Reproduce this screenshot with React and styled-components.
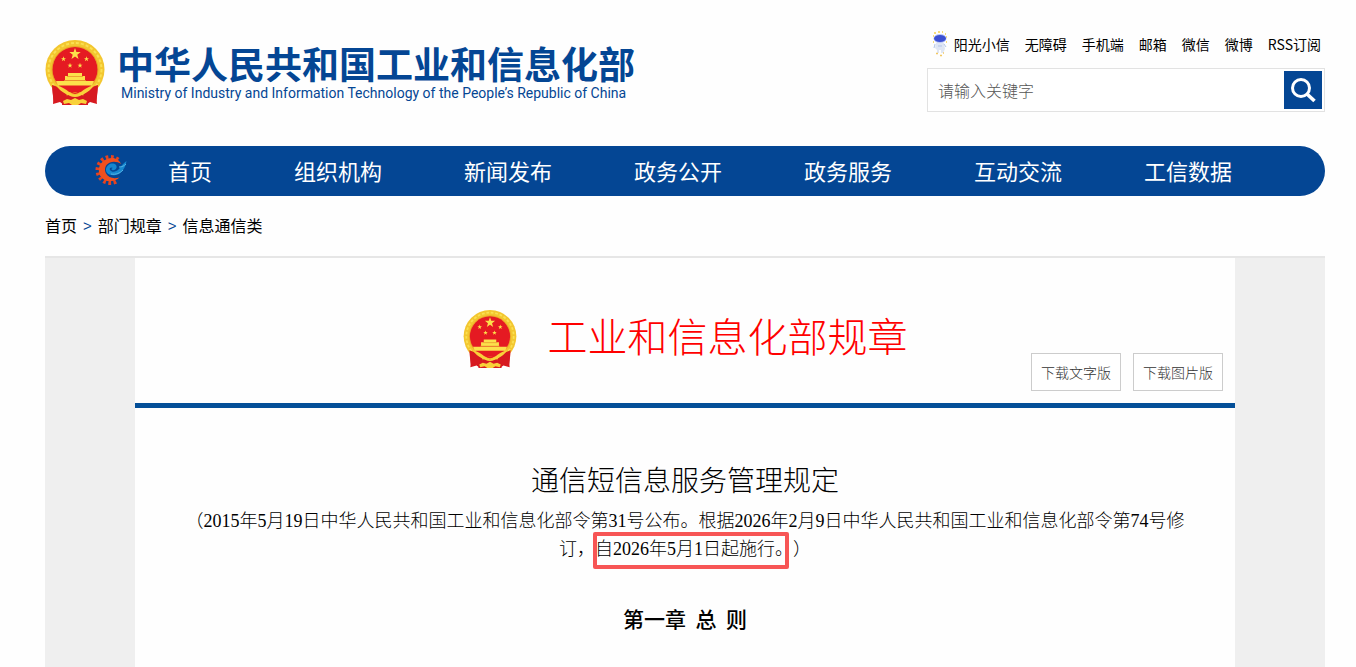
import React from "react";
import styled, { createGlobalStyle } from "styled-components";

const GlobalStyle = createGlobalStyle`
  * {
    box-sizing: border-box;
  }

  body {
    margin: 0;
    background-color: #fefefe;
    color: #000;
    font-family: "Noto Sans CJK SC", sans-serif;
    font-size: 16px;
  }

  a {
    color: inherit;
    text-decoration: none;
  }
`;

const Page = styled.div`
  display: flex;
  flex-direction: column;
  min-height: 100vh;
  padding: 0 31px 0 45px;
`;

const Header = styled.header`
  display: flex;
  justify-content: space-between;
  align-items: flex-start;
  padding: 31px 0 34px;
`;

const Brand = styled.a`
  display: flex;
  gap: 12px;
  padding-top: 9px;
  color: #044694;
`;

const BrandName = styled.span`
  display: block;
  font-size: 37px;
  font-weight: 700;
  line-height: 46px;
  white-space: nowrap;
`;

const BrandEnglish = styled.span`
  display: block;
  padding-left: 4px;
  font-family: Roboto, "Noto Sans", sans-serif;
  font-size: 14px;
  line-height: 14px;
  white-space: nowrap;
`;

const Tools = styled.div`
  width: 398px;
`;

const QuickLinks = styled.nav`
  display: flex;
  justify-content: flex-end;
  align-items: center;
  gap: 15px;
  height: 26px;
  margin-bottom: 11px;
  padding-right: 4px;
  font-size: 14px;
  line-height: 26px;
  white-space: nowrap;

  a {
    display: flex;
    align-items: center;
    gap: 6px;
  }
`;

const Search = styled.form`
  display: flex;
  height: 44px;
  padding: 2px;
  border: 1px solid #e2e2e2;
  background-color: white;

  input {
    flex: 1;
    min-width: 0;
    padding: 0 8px;
    border: none;
    outline: none;
    background: none;
    font-family: inherit;
    font-size: 16px;
    font-weight: 300;
  }

  input::placeholder {
    color: #555;
    opacity: 1;
  }

  button {
    display: flex;
    align-items: center;
    justify-content: center;
    width: 38px;
    height: 38px;
    padding: 0;
    border: none;
    background-color: #044694;
    cursor: pointer;
  }
`;

const MainNav = styled.nav`
  display: flex;
  align-items: center;
  gap: 82px;
  height: 50px;
  padding: 0 0 3px 49px;
  border-radius: 25px;
  background-color: #044694;
  color: white;
  font-size: 22px;
  line-height: 44px;
  white-space: nowrap;
`;

const NavHome = styled.a`
  display: flex;
  align-items: center;
  gap: 41px;
`;

const Breadcrumb = styled.nav`
  display: flex;
  gap: 6px;
  padding: 15px 0 16px;
  line-height: 29px;

  span {
    color: #044694;
    font-family: "Liberation Sans", sans-serif;
    font-size: 15px;
  }
`;

const Backdrop = styled.main`
  display: grid;
  flex: 1;
  padding: 0 90px;
  border-top: 2px solid #e6e6e6;
  background-color: #efefef;
`;

const Sheet = styled.article`
  background-color: #fefefe;
`;

const SheetHeader = styled.div`
  display: grid;
  grid-template-columns: 1fr auto 1fr;
  padding: 52px 12px 12px;
  border-bottom: 5px solid #044f98;
`;

const SheetTitle = styled.div`
  display: flex;
  grid-column: 2;
  gap: 31px;
  padding-bottom: 22px;
  color: #f00;
  font-size: 40px;
  font-weight: 300;
  line-height: 50px;
  white-space: nowrap;
`;

const Downloads = styled.div`
  display: flex;
  align-self: end;
  justify-self: end;
  gap: 12px;
`;

const DownloadButton = styled.button`
  width: 90px;
  height: 38px;
  padding: 0;
  border: 1px solid #ccc;
  background-color: white;
  color: #333;
  font-family: inherit;
  font-size: 14px;
  font-weight: 300;
  cursor: pointer;
`;

const Content = styled.div`
  padding: 51px 48px 0;
  text-align: center;
`;

const DocTitle = styled.h1`
  margin: 0 0 8px;
  font-size: 28px;
  font-weight: 300;
  line-height: 40px;
`;

const Preamble = styled.p`
  margin: 0;
  font-family: "Liberation Serif", "Noto Sans CJK SC", serif;
  font-size: 18px;
  font-weight: 300;
  line-height: 28px;
  text-spacing-trim: space-all;
`;

const Marked = styled.span`
  position: relative;

  &::after {
    content: "";
    position: absolute;
    inset: -7px 4px -10px -2px;
    border: 4px solid #f75555;
    border-radius: 2px;
  }
`;

const Chapter = styled.h2`
  margin: 40px 0 0;
  font-size: 21px;
  font-weight: 500;
  line-height: 30px;
`;

const star = "M0-6 1.4-1.9 5.7-1.9 2.3.7 3.5 4.9 0 2.4-3.5 4.9-2.3.7-5.7-1.9-1.4-1.9Z";

const Emblem = ({ width, height }) => (
  <svg width={width} height={height} viewBox="0 0 60 66" aria-hidden="true">
    <path d="M8 44c5 1 9 4 13 9l-2 12-4-3-7 2c1-6-1-12 0-20ZM52 44c-5 1-9 4-13 9l2 12 4-3 7 2c-1-6 1-12 0-20Z" fill="#d71920" />
    <circle cx="30" cy="29.500" r="29.500" fill="#f3c62f" />
    <circle cx="30" cy="29.500" r="26.500" fill="none" stroke="#fae052" strokeWidth="2" strokeDasharray="3 2" />
    <circle cx="30" cy="29.500" r="23" fill="none" stroke="#e9a526" strokeWidth="1" />
    <circle cx="30" cy="29.500" r="22.500" fill="#e51a22" />
    <g fill="#fce04b">
      <path d={star} transform="translate(30 14)" />
      <path d={star} transform="translate(18.500 19) scale(.45)" />
      <path d={star} transform="translate(41.500 19) scale(.45)" />
      <path d={star} transform="translate(25 25.500) scale(.45)" />
      <path d={star} transform="translate(35 25.500) scale(.45)" />
      <path d="M23 33h14v3h3v4.500H20V36h3Z" />
      <path d="M11 41h38l-2 4.500H13Z" />
    </g>
    <path d="M22 36.500h16M19 40.500h22" stroke="#e9942b" strokeWidth=".8" />
    <path d="M12 46h36c-3 3-8 5-12 6H24c-4-1-9-3-12-6Z" fill="#e51a22" />
    <path d="M7 45c0 5 1 11 2 18l7-3 3 3 3-8c-3-4-8-8-15-10ZM53 45c0 5-1 11-2 18l-7-3-3 3-3-8c3-4 8-8 15-10Z" fill="#d71920" />
    <path d="M17 65c0-5 2-8 6-10h14c4 2 6 5 6 10Z" fill="#d71920" />
    <path d="M11 45c6 2 10 4 13 7 3 4 9 4 12 0 3-3 7-5 13-7-2 4-6 7-10 9-3 1-5 3-9 3s-6-2-9-3c-4-2-8-5-10-9Z" fill="#f8d13a" />
    <path d="M25 51c3 3 7 3 10 0" stroke="#e51a22" strokeWidth="1.500" fill="none" />
    <path d="m18 61 4-2 4 1 4-2 4 2 4-1 4 2-1 3-5-1-3 2h-6l-3-2-5 1Z" fill="#f8d13a" />
  </svg>
);

const GearLogo = () => (
  <svg width="33" height="33" viewBox="0 0 33 33" fill="none" aria-hidden="true">
    <path
      d="M24 7A12.500 12.500 0 1 0 24 27"
      stroke="#e6431f"
      strokeWidth="5"
      strokeDasharray="2.600 2.400"
    />
    <path
      d="M27 11C25 5.500 19 3.500 13 6 6 8.500 3 16 6 22.500c4 7 13 7.500 19.500 2-6 1.500-11 .5-13.500-4-2-4-1-9 4-11 4-1.500 8-.5 11 1.500Z"
      fill="#f0501e"
    />
    <path
      d="M32.500 8c-1 7-5 13-11 14-6 1-10-2-9.500-6 1-5 7-7 10-4 2 3-1 6-4 5-1-1-.5-2 1-2-2-1.500-4 0-3 2 2 3 6 2 9-1 2-3 4-5 7.500-8Z"
      fill="#1687cf"
    />
    <path d="M25 14c3 0 5-1 7-3M17 21c5 1 9-1 12-4" stroke="#56b5e6" strokeWidth="1" />
  </svg>
);

const Mascot = () => (
  <svg width="16" height="26" viewBox="0 0 16 26" aria-hidden="true">
    <path d="M2 2h2M6 1h2M10 1h1M13 3h1M14 6h1M1 5h1M1 11h1M14 11h1" stroke="#f3cf50" strokeWidth="1.500" />
    <ellipse cx="8" cy="7.500" rx="6.500" ry="4.500" fill="#bac7f5" />
    <ellipse cx="8" cy="7.500" rx="6" ry="3.500" fill="#3c50d2" />
    <path d="M4 12h8l1 6-2 4H9v-3H7v3H5v-3l-2-2Z" fill="#dfe6f4" />
    <path d="m3 13-1 4M12 13l2 3M6 15h4" stroke="#b3c5e8" strokeWidth="1" />
    <path d="M4 22.500h2M8 24.500h2M11 22h1" stroke="#f2c862" strokeWidth="1.500" />
  </svg>
);

const SearchIcon = () => (
  <svg width="26" height="26" viewBox="0 0 26 26" fill="none" stroke="#fff" aria-hidden="true">
    <circle cx="11" cy="11" r="8.500" strokeWidth="3" />
    <path d="m17 17 7.500 7" strokeWidth="3.600" />
  </svg>
);

const quickLinks = ["无障碍", "手机端", "邮箱", "微信", "微博", "RSS订阅"];
const sections = ["组织机构", "新闻发布", "政务公开", "政务服务", "互动交流", "工信数据"];

const App = () => {
  return (
    <>
      <GlobalStyle />
      <Page>
        <Header>
          <Brand href="#">
            <Emblem width={60} height={66} />
            <span>
              <BrandName>中华人民共和国工业和信息化部</BrandName>
              <BrandEnglish lang="en">
                Ministry of Industry and Information Technology of the People’s Republic of China
              </BrandEnglish>
            </span>
          </Brand>
          <Tools>
            <QuickLinks>
              <a href="#">
                <Mascot />
                阳光小信
              </a>
              {quickLinks.map((name) => (
                <a href="#" key={name}>
                  {name}
                </a>
              ))}
            </QuickLinks>
            <Search onSubmit={(e) => e.preventDefault()}>
              <input type="text" placeholder="请输入关键字" aria-label="请输入关键字" />
              <button type="submit" aria-label="搜索">
                <SearchIcon />
              </button>
            </Search>
          </Tools>
        </Header>
        <MainNav>
          <NavHome href="#">
            <GearLogo />
            首页
          </NavHome>
          {sections.map((name) => (
            <a href="#" key={name}>
              {name}
            </a>
          ))}
        </MainNav>
        <Breadcrumb>
          <a href="#">首页</a>
          <span>&gt;</span>
          <a href="#">部门规章</a>
          <span>&gt;</span>
          <a href="#">信息通信类</a>
        </Breadcrumb>
        <Backdrop>
          <Sheet>
            <SheetHeader>
              <SheetTitle>
                <Emblem width={54} height={59} />
                工业和信息化部规章
              </SheetTitle>
              <Downloads>
                <DownloadButton type="button">下载文字版</DownloadButton>
                <DownloadButton type="button">下载图片版</DownloadButton>
              </Downloads>
            </SheetHeader>
            <Content>
              <DocTitle>通信短信息服务管理规定</DocTitle>
              <Preamble>
                （2015年5月19日中华人民共和国工业和信息化部令第31号公布。根据2026年2月9日中华人民共和国工业和信息化部令第74号修订，
                <Marked>自2026年5月1日起施行。</Marked>）
              </Preamble>
              <Chapter>第一章&nbsp;&nbsp;总&nbsp;&nbsp;则</Chapter>
            </Content>
          </Sheet>
        </Backdrop>
      </Page>
    </>
  );
};

export default App;
